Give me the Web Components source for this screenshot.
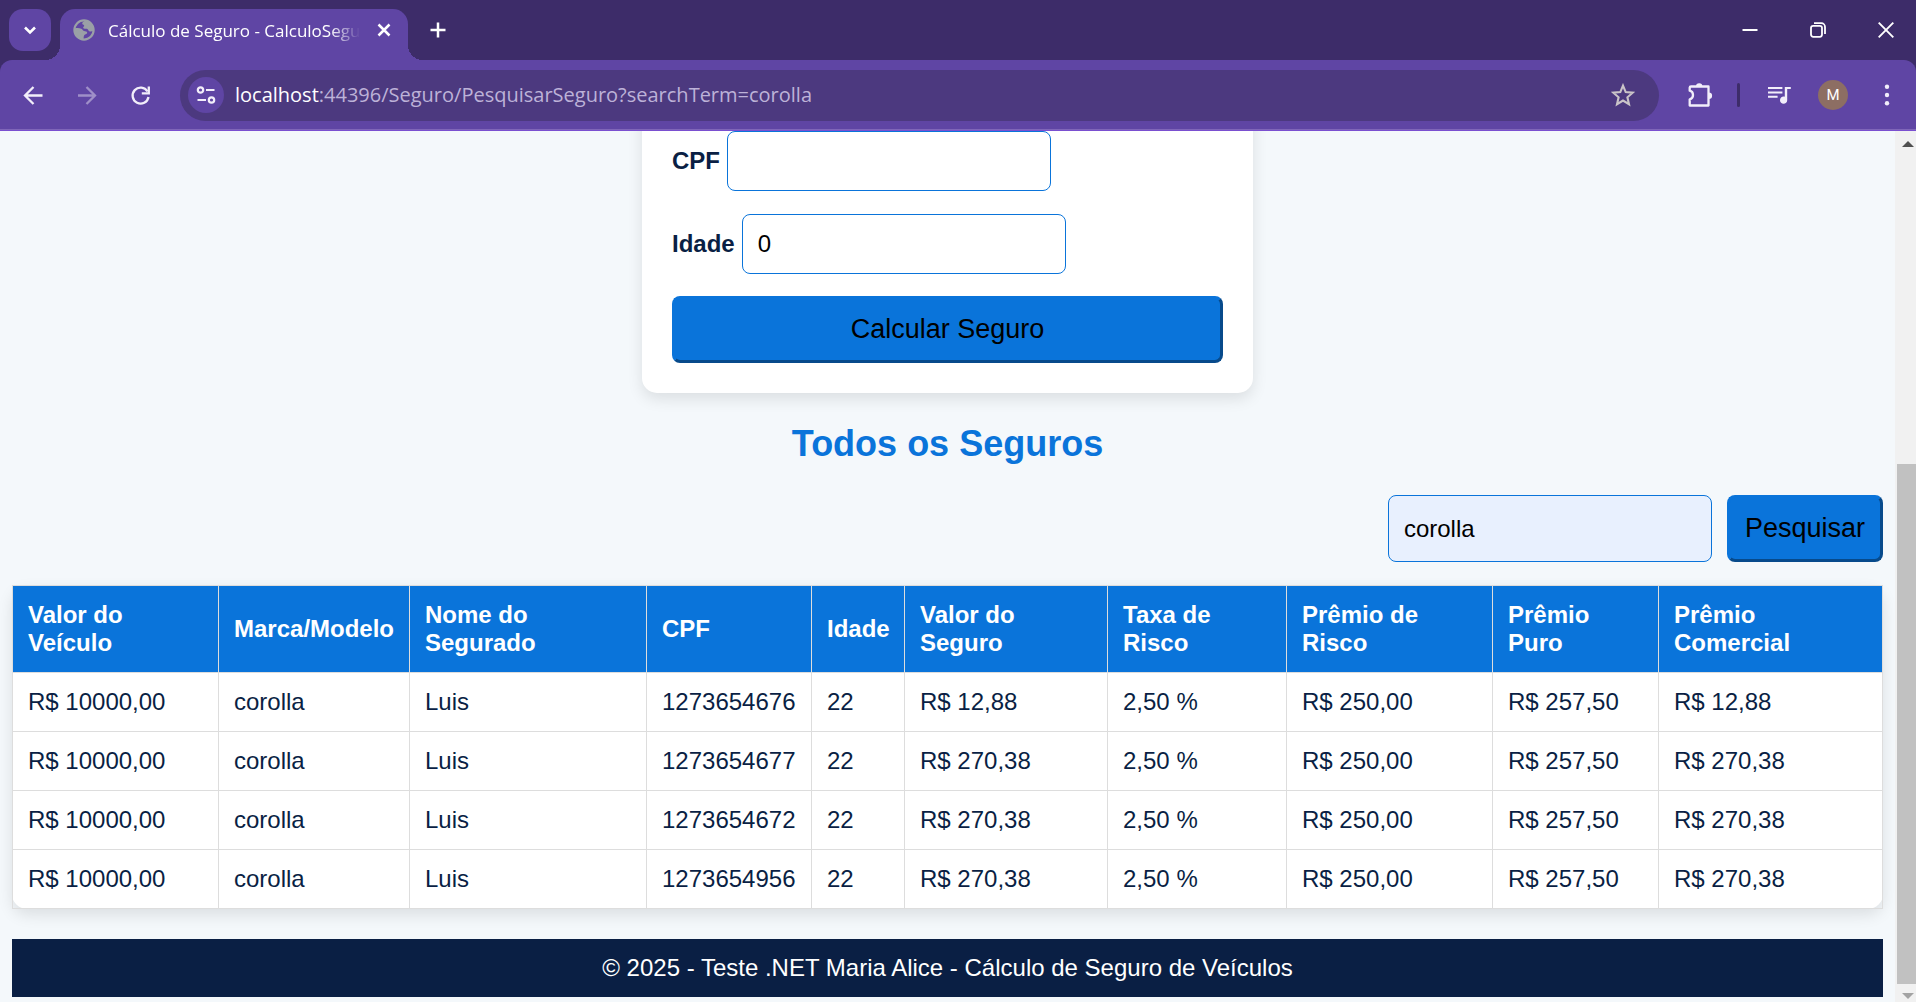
<!DOCTYPE html>
<html lang="pt-BR">
<head>
<meta charset="utf-8">
<title>Cálculo de Seguro - CalculoSeguro</title>
<style>
  body { margin: 0; font-family: "Liberation Sans", Arial, sans-serif; font-size: 24px; line-height: 28px; color: #0a1f44; }
</style>
</head>
<body>
<browser-window>
  <tab-strip slot="tabs">Cálculo de Seguro - CalculoSeguro</tab-strip>
  <tool-bar slot="toolbar"><span slot="host">localhost</span><span slot="path">:44396/Seguro/PesquisarSeguro?searchTerm=corolla</span></tool-bar>
  <insurance-form></insurance-form>
  <section-title>Todos os Seguros</section-title>
  <search-bar value="corolla"></search-bar>
  <insurance-table></insurance-table>
  <page-footer>© 2025 - Teste .NET Maria Alice - Cálculo de Seguro de Veículos</page-footer>
</browser-window>

<script>
const define = (name, html, setup) => {
  const tpl = document.createElement('template');
  tpl.innerHTML = html;
  customElements.define(name, class extends HTMLElement {
    constructor() {
      super();
      this.attachShadow({ mode: 'open' }).append(tpl.content.cloneNode(true));
    }
    connectedCallback() { if (setup) setup(this, this.shadowRoot); }
  });
};

/* Fixed-size vector icons, chosen by name */
const ICONS = {
  chevron: [14, 14, '<path d="M2 4.5l5 5 5-5" fill="none" stroke="currentColor" stroke-width="2.6"/>'],
  globe: [22, 22, '<circle cx="11" cy="11" r="9.6" fill="none" stroke="#9aa0a6" stroke-width="2.2"/><path fill="#9aa0a6" d="M1.500 9.500c2.500-.8 5-.6 6.800.2 1.600.7 1.200 1.900 2.700 2.300 1.500.3 3 .2 3.200 1.600.2 1.300-1.200 1.500-2.200 2-1.400.7-1.200 2.500-1.500 5.200C5 20.500 1 16.500 1.500 9.500zM12.500 1.200c-1 1.200-3.300 1.500-3.300 3.300 0 1.400 1.700.8 2 2 .2 1.200-1.500 1.600-1 2.600.8 1.300 3 .1 4.200.9 1.200.8.900 2.200 2.400 2.500 1.300.2 2.400-.6 4.200-.5C21.300 6 18 1.500 12.500 1.200z"/>'],
  close: [14, 14, '<path d="M1.500 1.500l11 11M12.500 1.500l-11 11" stroke="currentColor" stroke-width="2.500"/>'],
  plus: [16, 16, '<path d="M8 .5v15M.5 8h15" stroke="currentColor" stroke-width="2.500"/>'],
  minimize: [16, 16, '<path d="M.5 8h15" stroke="currentColor" stroke-width="2"/>'],
  restore: [16, 16, '<g fill="none" stroke="currentColor" stroke-width="1.800"><rect x="1" y="3.800" width="11" height="11" rx="2.200"/><path d="M4 1.200h7.300a3.700 3.700 0 0 1 3.700 3.700v7"/></g>'],
  winclose: [16, 16, '<path d="M.7.7l14.600 14.600M15.300.7L.7 15.300" stroke="currentColor" stroke-width="1.900"/>'],
  back: [27, 27, '<path d="M13.500 5l-8.500 8.500 8.500 8.500M5.500 13.500H22.500" fill="none" stroke="currentColor" stroke-width="2.300"/>'],
  forward: [27, 27, '<path d="M12.500 5l8.500 8.500-8.500 8.500M20.500 13.500H4" fill="none" stroke="currentColor" stroke-width="2.300"/>'],
  reload: [27, 27, '<path d="M19.500 9.500A8 8 0 1 0 20.500 15" fill="none" stroke="currentColor" stroke-width="2.300"/><path d="M20.800 4.500v6.900h-7" fill="none" stroke="currentColor" stroke-width="2.300"/>'],
  tune: [20, 18, '<g fill="none" stroke="currentColor" stroke-width="2.200"><circle cx="4.500" cy="4" r="2.700"/><path d="M10 4h8.500M1.500 14h8.500"/><circle cx="15.500" cy="14" r="2.700"/></g>'],
  star: [24, 24, '<path d="M12 2.600l2.700 6.500 7 .6-5.300 4.600 1.600 6.900-6-3.700-6 3.700 1.600-6.900L2.300 9.700l7-.6z" fill="none" stroke="currentColor" stroke-width="2.100"/>'],
  puzzle: [26, 26, '<path d="M4 4.500h17.500v19H2.700v-6.200c4.400-1 4.400-7.600 0-8.600V5.700A1.300 1.300 0 0 1 4 4.500z" fill="none" stroke="currentColor" stroke-width="2.300" stroke-linejoin="round"/><path d="M9 4.500a3.200 3.200 0 0 1 6.400 0zM21.800 10.500a3.300 3.300 0 0 1 0 6.600z" fill="currentColor"/>'],
  music: [23, 17, '<path transform="scale(1.200) translate(-3 -6)" d="M15 6H3v1.700h12zm0 3.700H3v1.700h12zM3 15h8v-1.700H3zM17 6v8.180c-.31-.11-.65-.18-1-.18-1.660 0-3 1.340-3 3s1.340 3 3 3 3-1.340 3-3V7.700h3V6z" fill="currentColor"/>'],
  dots: [6, 22, '<g fill="currentColor"><circle cx="3" cy="2.700" r="2.200"/><circle cx="3" cy="11" r="2.200"/><circle cx="3" cy="19.300" r="2.200"/></g>'],
  up: [12, 6, '<path d="M0 6l6-6 6 6z" fill="#505050"/>'],
  down: [12, 6, '<path d="M0 0l6 6 6-6z" fill="#a3a3a3"/>'],
};
define('ui-icon', '<style>:host{display:block;flex:none}svg{display:block}</style>', (el, root) => {
  const [w, h, body] = ICONS[el.getAttribute('name')];
  root.innerHTML += `<svg width="${w}" height="${h}" viewBox="0 0 ${w} ${h}" aria-hidden="true">${body}</svg>`;
});

define('scroll-bar', `
<style>
  :host { display: flex; flex-direction: column; flex: none; width: 21px; box-sizing: border-box; background: #f1f1f1; }
  .end { display: flex; align-items: center; justify-content: center; padding-left: 4px; flex: none; }
  .top { height: 26px; }
  .bottom { height: 12px; padding-top: 6px; }
  .before { flex: 307; }
  .thumb { flex: 520; margin-left: 2px; background: #c1c1c1; }
</style>
<div class="end top"><ui-icon name="up"></ui-icon></div>
<div class="before"></div><div class="thumb"></div>
<div class="end bottom"><ui-icon name="down"></ui-icon></div>`);

define('browser-window', `
<style>
  :host { display: flex; flex-direction: column; height: 100vh; overflow: hidden; background: #3d2c69; }
  .view { flex: 1; min-height: 0; display: flex; background: #f4f8fb; }
  main { flex: 1; min-width: 0; overflow: hidden; padding: 0 12px; }
</style>
<slot name="tabs"></slot>
<slot name="toolbar"></slot>
<div class="view"><main><slot></slot></main><scroll-bar></scroll-bar></div>`);

define('tab-strip', `
<style>
  :host { display: flex; height: 60px; padding: 0 0 0 9px; box-sizing: border-box; color: #fff; font: 17px/24px "Open Sans", "Noto Sans", sans-serif; flex: none; }
  button { border: 0; background: none; padding: 0; color: inherit; display: flex; align-items: center; justify-content: center; }
  .list { width: 42px; height: 42px; margin: 9px 9px 0 0; border-radius: 14px; background: #5f45a4; }
  .tab { position: relative; width: 348px; margin-top: 9px; padding: 0 17px 9px 13px; box-sizing: border-box; display: flex; align-items: center; background: #5f45a4; border-radius: 15px 15px 0 0; }
  .tab::before, .tab::after { content: ""; position: absolute; bottom: 0; width: 15px; height: 15px; }
  .tab::before { right: 100%; background: radial-gradient(circle at 0 0, transparent 15px, #5f45a4 15px); }
  .tab::after { left: 100%; background: radial-gradient(circle at 100% 0, transparent 15px, #5f45a4 15px); }
  .title { flex: 1; margin: 0 17px 0 13px; padding-top: 2px; overflow: hidden; white-space: nowrap; -webkit-mask-image: linear-gradient(90deg, #000 88%, transparent); mask-image: linear-gradient(90deg, #000 88%, transparent); }
  .new { width: 42px; height: 42px; margin: 9px 0 0 9px; }
  .win { margin-left: auto; display: flex; gap: 7px; }
  .win button { width: 61px; }
</style>
<button class="list" aria-label="Pesquisar guias"><ui-icon name="chevron"></ui-icon></button>
<div class="tab"><ui-icon name="globe"></ui-icon><span class="title"><slot></slot></span><button aria-label="Fechar guia"><ui-icon name="close"></ui-icon></button></div>
<button class="new" aria-label="Nova guia"><ui-icon name="plus"></ui-icon></button>
<div class="win">
  <button aria-label="Minimizar"><ui-icon name="minimize"></ui-icon></button>
  <button aria-label="Restaurar"><ui-icon name="restore"></ui-icon></button>
  <button aria-label="Fechar"><ui-icon name="winclose"></ui-icon></button>
</div>`);

define('tool-bar', `
<style>
  :host { display: flex; align-items: center; flex: none; height: 71px; box-sizing: border-box; padding: 0 2px 0 6px; background: #5f45a4; border-radius: 12px 12px 0 0; border-bottom: 1px solid #7a4fd0; box-shadow: inset 0 -1px #7f66b8; color: #f2eefa; }
  button { width: 54px; height: 54px; border: 0; padding: 0; background: none; color: inherit; display: flex; align-items: center; justify-content: center; }
  .off { color: #9f8fc8; }
  .url { flex: 1; min-width: 0; height: 51px; margin: 0 14px 0 12px; box-sizing: border-box; padding: 0 9px 0 8px; border-radius: 26px; background: #4c397f; display: flex; align-items: center; font: 20px/28px "Open Sans", "Noto Sans", sans-serif; color: #bdb2d8; }
  .url .site { width: 36px; height: 36px; border-radius: 50%; background: #5f45a4; margin-right: 11px; color: #f2eefa; }
  .host { color: #fff; }
  .path { flex: 1; white-space: nowrap; overflow: hidden; }
  .star { color: #cac4c8; }
  .sep { width: 3px; height: 24px; border-radius: 2px; background: #3d2c69; margin: 0 12px 0 10px; }
  .avatar { width: 30px; height: 30px; border-radius: 50%; background: #8d6e63; color: #fff; font: 15px/30px Roboto, sans-serif; text-align: center; }
</style>
<button aria-label="Voltar"><ui-icon name="back"></ui-icon></button>
<button class="off" aria-label="Avançar"><ui-icon name="forward"></ui-icon></button>
<button aria-label="Recarregar"><ui-icon name="reload"></ui-icon></button>
<div class="url">
  <button class="site" aria-label="Informações do site"><ui-icon name="tune"></ui-icon></button>
  <span class="host"><slot name="host"></slot></span><span class="path"><slot name="path"></slot></span>
  <button class="star" aria-label="Favoritos"><ui-icon name="star"></ui-icon></button>
</div>
<button aria-label="Extensões"><ui-icon name="puzzle"></ui-icon></button>
<div class="sep"></div>
<button aria-label="Mídia"><ui-icon name="music"></ui-icon></button>
<button aria-label="Perfil"><span class="avatar">M</span></button>
<button aria-label="Menu"><ui-icon name="dots"></ui-icon></button>`);

/* Styles shared by the page's inputs and buttons */
const CONTROLS = `
  input { width: 324px; box-sizing: border-box; padding: 15px; border: 1px solid #0a74da; border-radius: 8px; background: #fff; color: #000; font: inherit; line-height: 28px; height: 60px; margin: 0; }
  button { padding: 15px; border: 3px solid; border-color: #0a74da #074a8b #074a8b #0a74da; border-radius: 8px; background: #0a74da; color: #000; font: inherit; font-size: 27px; line-height: 31px; }`;

define('form-field', `
<style>
  :host { display: flex; align-items: center; gap: 7px; }
  label { font-weight: bold; }
  ${CONTROLS}
</style>
<label for="field"></label><input id="field" type="text">`, (el, root) => {
  root.querySelector('label').textContent = el.getAttribute('label');
  root.querySelector('input').value = el.getAttribute('value') || '';
});

define('insurance-form', `
<style>
  :host { display: block; }
  form { width: 611px; max-width: 100%; box-sizing: border-box; margin: -30px auto 30px; padding: 30px; display: flex; flex-direction: column; gap: 22px; background: #fff; border-radius: 15px; box-shadow: 0 6px 15px rgba(0,0,0,.1); }
  .fields { display: flex; flex-direction: column; gap: 23px; }
  ${CONTROLS}
</style>
<form>
  <div class="fields">
    <form-field label="CPF"></form-field>
    <form-field label="Idade" value="0"></form-field>
  </div>
  <button type="button">Calcular Seguro</button>
</form>`);

define('section-title', `
<style>
  :host { display: block; }
  h2 { margin: 0 0 30px; font-size: 36px; line-height: 42px; text-align: center; color: #0a74da; }
</style>
<h2><slot></slot></h2>`);

define('search-bar', `
<style>
  :host { display: block; }
  form { display: flex; justify-content: flex-end; gap: 15px; margin-bottom: 23px; }
  ${CONTROLS}
  input { height: auto; background: #e8f0fe; }
</style>
<form><input type="text" aria-label="Pesquisar veículo"><button type="button">Pesquisar</button></form>`, (el, root) => {
  root.querySelector('input').value = el.getAttribute('value');
});

const HEAD = ['Valor do Veículo', 'Marca/Modelo', 'Nome do Segurado', 'CPF', 'Idade', 'Valor do Seguro', 'Taxa de Risco', 'Prêmio de Risco', 'Prêmio Puro', 'Prêmio Comercial'];
const ROWS = [['1273654676', '12,88'], ['1273654677', '270,38'], ['1273654672', '270,38'], ['1273654956', '270,38']]
  .map(([cpf, v]) => ['R$ 10000,00', 'corolla', 'Luis', cpf, '22', 'R$ ' + v, '2,50 %', 'R$ 250,00', 'R$ 257,50', 'R$ ' + v]);
const COLS = [206, 191, 237, 165, 93, 203, 179, 206, 166, 224];
define('insurance-table', `
<style>
  :host { display: block; margin-bottom: 30px; }
  table { width: 100%; table-layout: fixed; border-collapse: collapse; background: #fff; border-radius: 15px; box-shadow: 0 6px 15px rgba(0,0,0,.1); }
  th, td { border: 1px solid #ddd; padding: 15px; text-align: left; }
  th { background: #0a74da; color: #fff; }
</style>
<table><colgroup></colgroup><thead><tr></tr></thead><tbody></tbody></table>`, (el, root) => {
  const total = COLS.reduce((a, b) => a + b);
  root.querySelector('colgroup').innerHTML = COLS.map(w => `<col style="width:${w / total * 100}%">`).join('');
  root.querySelector('thead tr').innerHTML = HEAD.map(t => `<th scope="col">${t.replace(/ (?=\S+$)/, '<br>')}</th>`).join('');
  root.querySelector('tbody').innerHTML = ROWS.map(r => `<tr>${r.map(c => `<td>${c}</td>`).join('')}</tr>`).join('');
});

define('page-footer', `
<style>
  :host { display: block; }
  footer { padding: 15px; background: #0a1f44; color: #fff; text-align: center; }
</style>
<footer><slot></slot></footer>`);
</script>
</body>
</html>
